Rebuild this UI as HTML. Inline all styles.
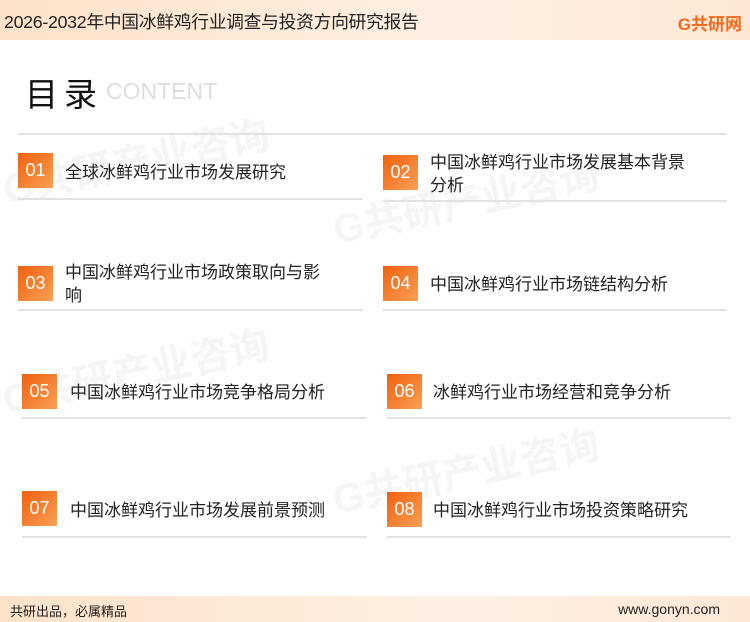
<!DOCTYPE html>
<html><head><meta charset="utf-8"><style>
*{margin:0;padding:0;box-sizing:border-box}
body{width:750px;height:622px;position:relative;overflow:hidden;background:#fff;font-family:"Liberation Sans","Noto Sans CJK SC",sans-serif;color:#222}
.hdr{position:absolute;left:0;top:0;width:750px;height:40px;background:linear-gradient(90deg,#fde2c9,#fdf0e3 60%,#fde8d6)}
.hdr .t{position:absolute;left:4px;top:8px;font-size:17.8px;color:#222;letter-spacing:-0.3px}
.logo{position:absolute;right:8px;top:10px;font-size:17px;font-weight:bold;color:#f26a1b}
.ftr{position:absolute;left:0;top:596px;width:750px;height:26px;background:linear-gradient(90deg,#fde2c9,#fdf0e3 60%,#fde8d6)}
.ftr .l{position:absolute;left:10px;top:5px;font-size:13px}
.ftr .r{position:absolute;right:30px;top:5px;font-size:14px}
.ttl{position:absolute;left:25px;top:68px;font-size:33px;letter-spacing:6px;color:#111}
.ct{position:absolute;left:106px;top:78px;font-size:23px;color:#ddd}
.ln{position:absolute;height:2px;background:#e2e2e2}
.bx{position:absolute;width:35px;height:35px;background:linear-gradient(135deg,#f0600f,#f9a055);color:#fff;font-size:18px;text-align:center;line-height:35px}
.tx{position:absolute;font-size:17px;line-height:23px;color:#222}
.wm{position:absolute;font-size:40px;font-weight:bold;color:#f5f5f5;transform:rotate(-12deg);white-space:nowrap}
</style></head><body>
<div class="wm" style="left:0;top:130px">G共研产业咨询</div>
<div class="wm" style="left:330px;top:170px">G共研产业咨询</div>
<div class="wm" style="left:0;top:340px">G共研产业咨询</div>
<div class="wm" style="left:330px;top:440px">G共研产业咨询</div>
<div class="hdr"><div class="t">2026-2032年中国冰鲜鸡行业调查与投资方向研究报告</div><div class="logo">G共研网</div></div>
<div class="ttl">目录</div><div class="ct">CONTENT</div>
<div class="ln" style="left:18px;top:133px;width:709px"></div>

<div class="bx" style="left:18px;top:153px">01</div><div class="tx" style="left:65px;top:161px">全球冰鲜鸡行业市场发展研究</div>
<div class="ln" style="left:18px;top:198px;width:345px"></div>
<div class="bx" style="left:383px;top:155px">02</div><div class="tx" style="left:430px;top:151px">中国冰鲜鸡行业市场发展基本背景<br>分析</div>
<div class="ln" style="left:383px;top:200px;width:344px"></div>

<div class="bx" style="left:18px;top:266px">03</div><div class="tx" style="left:65px;top:261px">中国冰鲜鸡行业市场政策取向与影<br>响</div>
<div class="ln" style="left:18px;top:309px;width:345px"></div>
<div class="bx" style="left:383px;top:266px">04</div><div class="tx" style="left:430px;top:273px">中国冰鲜鸡行业市场链结构分析</div>
<div class="ln" style="left:383px;top:309px;width:344px"></div>

<div class="bx" style="left:22px;top:374px">05</div><div class="tx" style="left:70px;top:381px">中国冰鲜鸡行业市场竞争格局分析</div>
<div class="ln" style="left:22px;top:417px;width:345px"></div>
<div class="bx" style="left:387px;top:374px">06</div><div class="tx" style="left:433px;top:381px">冰鲜鸡行业市场经营和竞争分析</div>
<div class="ln" style="left:387px;top:417px;width:344px"></div>

<div class="bx" style="left:22px;top:491px">07</div><div class="tx" style="left:70px;top:499px">中国冰鲜鸡行业市场发展前景预测</div>
<div class="ln" style="left:22px;top:536px;width:345px"></div>
<div class="bx" style="left:387px;top:492px">08</div><div class="tx" style="left:433px;top:499px">中国冰鲜鸡行业市场投资策略研究</div>
<div class="ln" style="left:387px;top:536px;width:344px"></div>

<div class="ftr"><div class="l">共研出品，必属精品</div><div class="r">www.gonyn.com</div></div>
</body></html>
